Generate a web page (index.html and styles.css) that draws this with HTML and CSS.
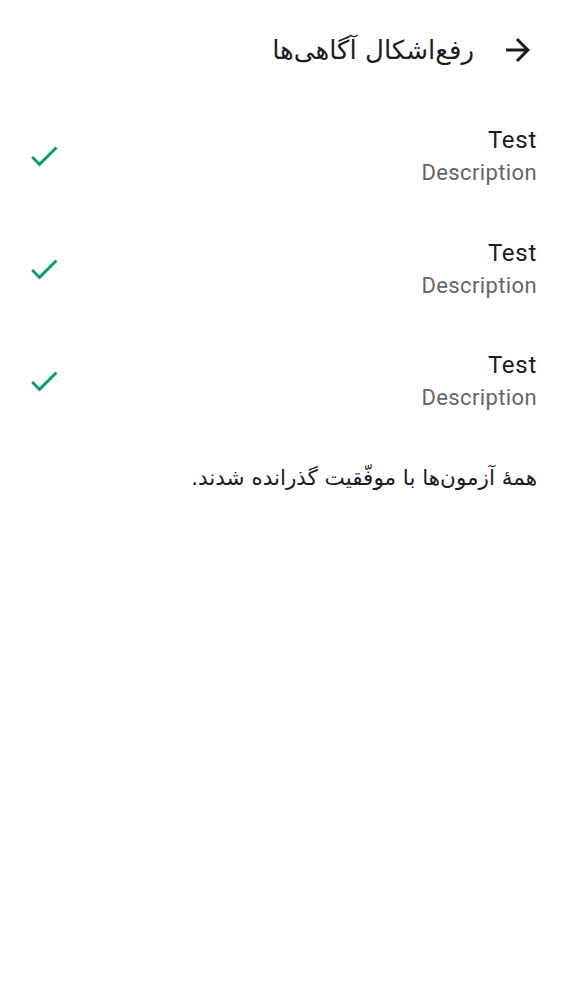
FILE: index.html
```html
<!DOCTYPE html>
<html lang="fa" dir="rtl">
<head>
<meta charset="utf-8">
<link rel="stylesheet" href="styles.css">
</head>
<body>
<div class="app">
  <header class="toolbar">
    <button class="back" aria-label="back">
      <svg viewBox="0 0 24 24" width="36" height="36"><path d="M12 4l-1.41 1.41L16.17 11H4v2h12.17l-5.58 5.59L12 20l8-8z" fill="#1c1b1f"/></svg>
    </button>
    <h1 class="title">رفع‌اشکال آگاهی‌ها</h1>
  </header>
  <ul class="list">
    <li class="row">
      <div class="texts"><div class="name">Test</div><div class="desc">Description</div></div>
      <svg class="check" viewBox="0 0 24 24" width="36" height="36"><path d="M9 16.17L4.83 12l-1.42 1.41L9 19 21 7l-1.41-1.41z" fill="#0f9a76"/></svg>
    </li>
    <li class="row">
      <div class="texts"><div class="name">Test</div><div class="desc">Description</div></div>
      <svg class="check" viewBox="0 0 24 24" width="36" height="36"><path d="M9 16.17L4.83 12l-1.42 1.41L9 19 21 7l-1.41-1.41z" fill="#0f9a76"/></svg>
    </li>
    <li class="row">
      <div class="texts"><div class="name">Test</div><div class="desc">Description</div></div>
      <svg class="check" viewBox="0 0 24 24" width="36" height="36"><path d="M9 16.17L4.83 12l-1.42 1.41L9 19 21 7l-1.41-1.41z" fill="#0f9a76"/></svg>
    </li>
  </ul>
  <p class="summary">همهٔ آزمون‌ها با موفّقیت گذرانده شدند.</p>
</div>
</body>
</html>
```
FILE: styles.css
```css
html, body {
  margin: 0;
  padding: 0;
  background: #ffffff;
}
body {
  font-family: Roboto, "DejaVu Sans", sans-serif;
  color: #1c1b1f;
}
.app {
  width: 562px;
  min-height: 1000px;
}
.toolbar {
  height: 100px;
  display: flex;
  align-items: center;
  padding: 0 26px 0 0;
  gap: 26px;
}
.back {
  width: 36px;
  height: 36px;
  padding: 0;
  border: 0;
  background: none;
  display: flex;
}
.title {
  margin: 0;
  font-size: 26px;
  font-weight: 400;
  line-height: 32px;
  font-family: "DejaVu Sans", sans-serif;
}
.list {
  list-style: none;
  margin: 0;
  padding: 0;
}
.row {
  height: 112.5px;
  display: flex;
  align-items: center;
  justify-content: space-between;
  padding: 0 25px 0 26px;
}
.texts {
  display: flex;
  flex-direction: column;
  direction: ltr;
  text-align: right;
  align-items: flex-end;
}
.name {
  font-size: 24px;
  line-height: 32px;
  letter-spacing: 0.75px;
  color: #1c1b1f;
}
.desc {
  margin-top: 2px;
  font-size: 22px;
  line-height: 30px;
  color: #5f6670;
  letter-spacing: 0.375px;
}
.check {
  display: block;
}
.summary {
  margin: 25px 0 0 0;
  padding: 0 25px;
  font-size: 21.5px;
  line-height: 30px;
  font-family: "DejaVu Sans", sans-serif;
}
```
